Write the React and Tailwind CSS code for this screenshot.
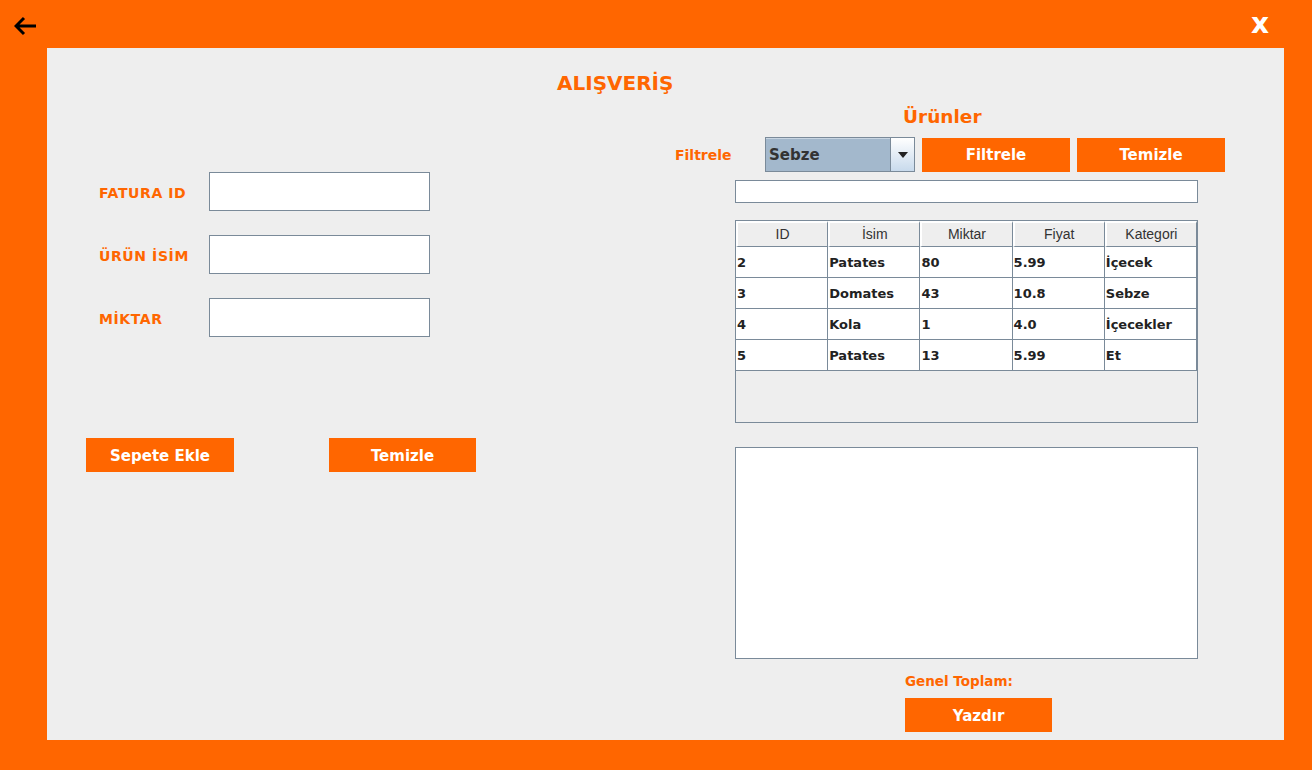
const cg = { fontFamily: "'DejaVu Sans', Lato, sans-serif" };
const ar = { fontFamily: "'Liberation Sans', Arial, sans-serif" };

const rows = [
  ["2", "Patates", "80", "5.99", "İçecek"],
  ["3", "Domates", "43", "10.8", "Sebze"],
  ["4", "Kola", "1", "4.0", "İçecekler"],
  ["5", "Patates", "13", "5.99", "Et"],
];

const headers = ["ID", "İsim", "Miktar", "Fiyat", "Kategori"];

function OrangeButton({ children, className = "" }) {
  return (
    <button
      className={`h-[34px] pt-[2px] bg-[#ff6600] text-white text-[15px] font-bold flex items-center justify-center ${className}`}
      style={cg}
    >
      {children}
    </button>
  );
}

function Field({ label }) {
  return (
    <div className="flex items-center h-[39px]">
      <span
        className="w-[123px] pl-[13px] pt-[3px] text-[14px] font-bold text-[#ff6600] tracking-[0.6px]"
        style={cg}
      >
        {label}
      </span>
      <input className="w-[221px] h-[39px] bg-white border border-[#7a8a99] outline-none" />
    </div>
  );
}

export default function App() {
  return (
    <div className="w-[1312px] h-[770px] bg-[#ff6600] flex flex-col overflow-hidden">
      {/* ust bar */}
      <div className="h-[48px] flex items-center justify-between pl-[14px] pr-[43px]">
        <svg width="24" height="20" viewBox="0 0 24 20" className="mt-[3px]">
          <path d="M22 10H3M10 2L2 10L10 18" stroke="#000" strokeWidth="3" fill="none" />
        </svg>
        <span className="text-white text-[28px] font-black leading-none" style={cg}>
          x
        </span>
      </div>

      {/* panel */}
      <div className="ml-[47px] w-[1237px] h-[692px] bg-[#eeeeee] flex flex-col">
        <div
          className="pt-[21px] pl-[510px] h-[48px] text-[20px] leading-[28px] font-bold text-[#ff6600]"
          style={cg}
        >
          ALIŞVERİŞ
        </div>

        <div className="flex">
          {/* sol */}
          <div className="w-[628px] pl-[39px] pt-[76px] flex flex-col">
            <div className="flex flex-col gap-[24px]">
              <Field label="FATURA ID" />
              <Field label="ÜRÜN İSİM" />
              <Field label="MİKTAR" />
            </div>
            <div className="flex gap-[95px] mt-[101px]">
              <OrangeButton className="w-[148px]">Sepete Ekle</OrangeButton>
              <OrangeButton className="w-[147px]">Temizle</OrangeButton>
            </div>
          </div>

          {/* sag */}
          <div className="flex flex-col">
            <div
              className="h-[34px] pt-[9px] pl-[228px] text-[18.5px] leading-[24px] font-bold text-[#ff6600]"
              style={cg}
            >
              Ürünler
            </div>

            <div className="flex items-center mt-[7px] h-[35px]">
              <span className="w-[90px] pt-[2px] text-[14px] font-bold text-[#ff6600]" style={cg}>
                Filtrele
              </span>
              <div className="w-[150px] h-[35px] flex border border-[#7a8a99] bg-[#a3b8cc]">
                <div
                  className="flex-1 flex items-center pl-[3px] text-[15px] font-bold text-[#333] border-t border-[#c8d5e2]"
                  style={cg}
                >
                  Sebze
                </div>
                <div className="w-[24px] border-l border-[#7a8a99] bg-gradient-to-b from-[#ffffff] to-[#c8daec] flex items-center justify-center">
                  <svg width="10" height="6" viewBox="0 0 10 6">
                    <path d="M0 0H10L5 6Z" fill="#222" />
                  </svg>
                </div>
              </div>
              <OrangeButton className="w-[148px] ml-[7px]">Filtrele</OrangeButton>
              <OrangeButton className="w-[148px] ml-[7px]">Temizle</OrangeButton>
            </div>

            <input className="ml-[60px] mt-[8px] w-[463px] h-[23px] bg-white border border-[#7a8a99] outline-none" />

            {/* tablo */}
            <div className="ml-[60px] mt-[17px] w-[463px] h-[203px] border border-[#7a8a99] bg-[#eeeeee] flex flex-col">
              <div className="grid grid-cols-5 h-[26px]">
                {headers.map((h) => (
                  <div
                    key={h}
                    className="flex items-center justify-center text-[14px] text-[#333] bg-[#eeeeee] border-r border-b border-[#7a8a99] border-l-2 border-l-white border-t-2 border-t-white"
                    style={ar}
                  >
                    {h}
                  </div>
                ))}
              </div>
              {rows.map((r, i) => (
                <div key={i} className="grid grid-cols-5 h-[31px]">
                  {r.map((c, j) => (
                    <div
                      key={j}
                      className="bg-white flex items-center pl-[1px] pt-[1px] text-[13px] font-bold text-[#222] border-r border-b border-[#7a8a99]"
                      style={cg}
                    >
                      {c}
                    </div>
                  ))}
                </div>
              ))}
            </div>

            <textarea className="ml-[60px] mt-[24px] w-[463px] h-[212px] bg-white border border-[#7a8a99] outline-none resize-none" />

            <div
              className="ml-[230px] mt-[13px] h-[18px] text-[13.5px] leading-[18px] font-bold text-[#ff6600]"
              style={cg}
            >
              Genel Toplam:
            </div>
            <OrangeButton className="w-[147px] ml-[230px] mt-[8px]">Yazdır</OrangeButton>
          </div>
        </div>
      </div>
    </div>
  );
}
